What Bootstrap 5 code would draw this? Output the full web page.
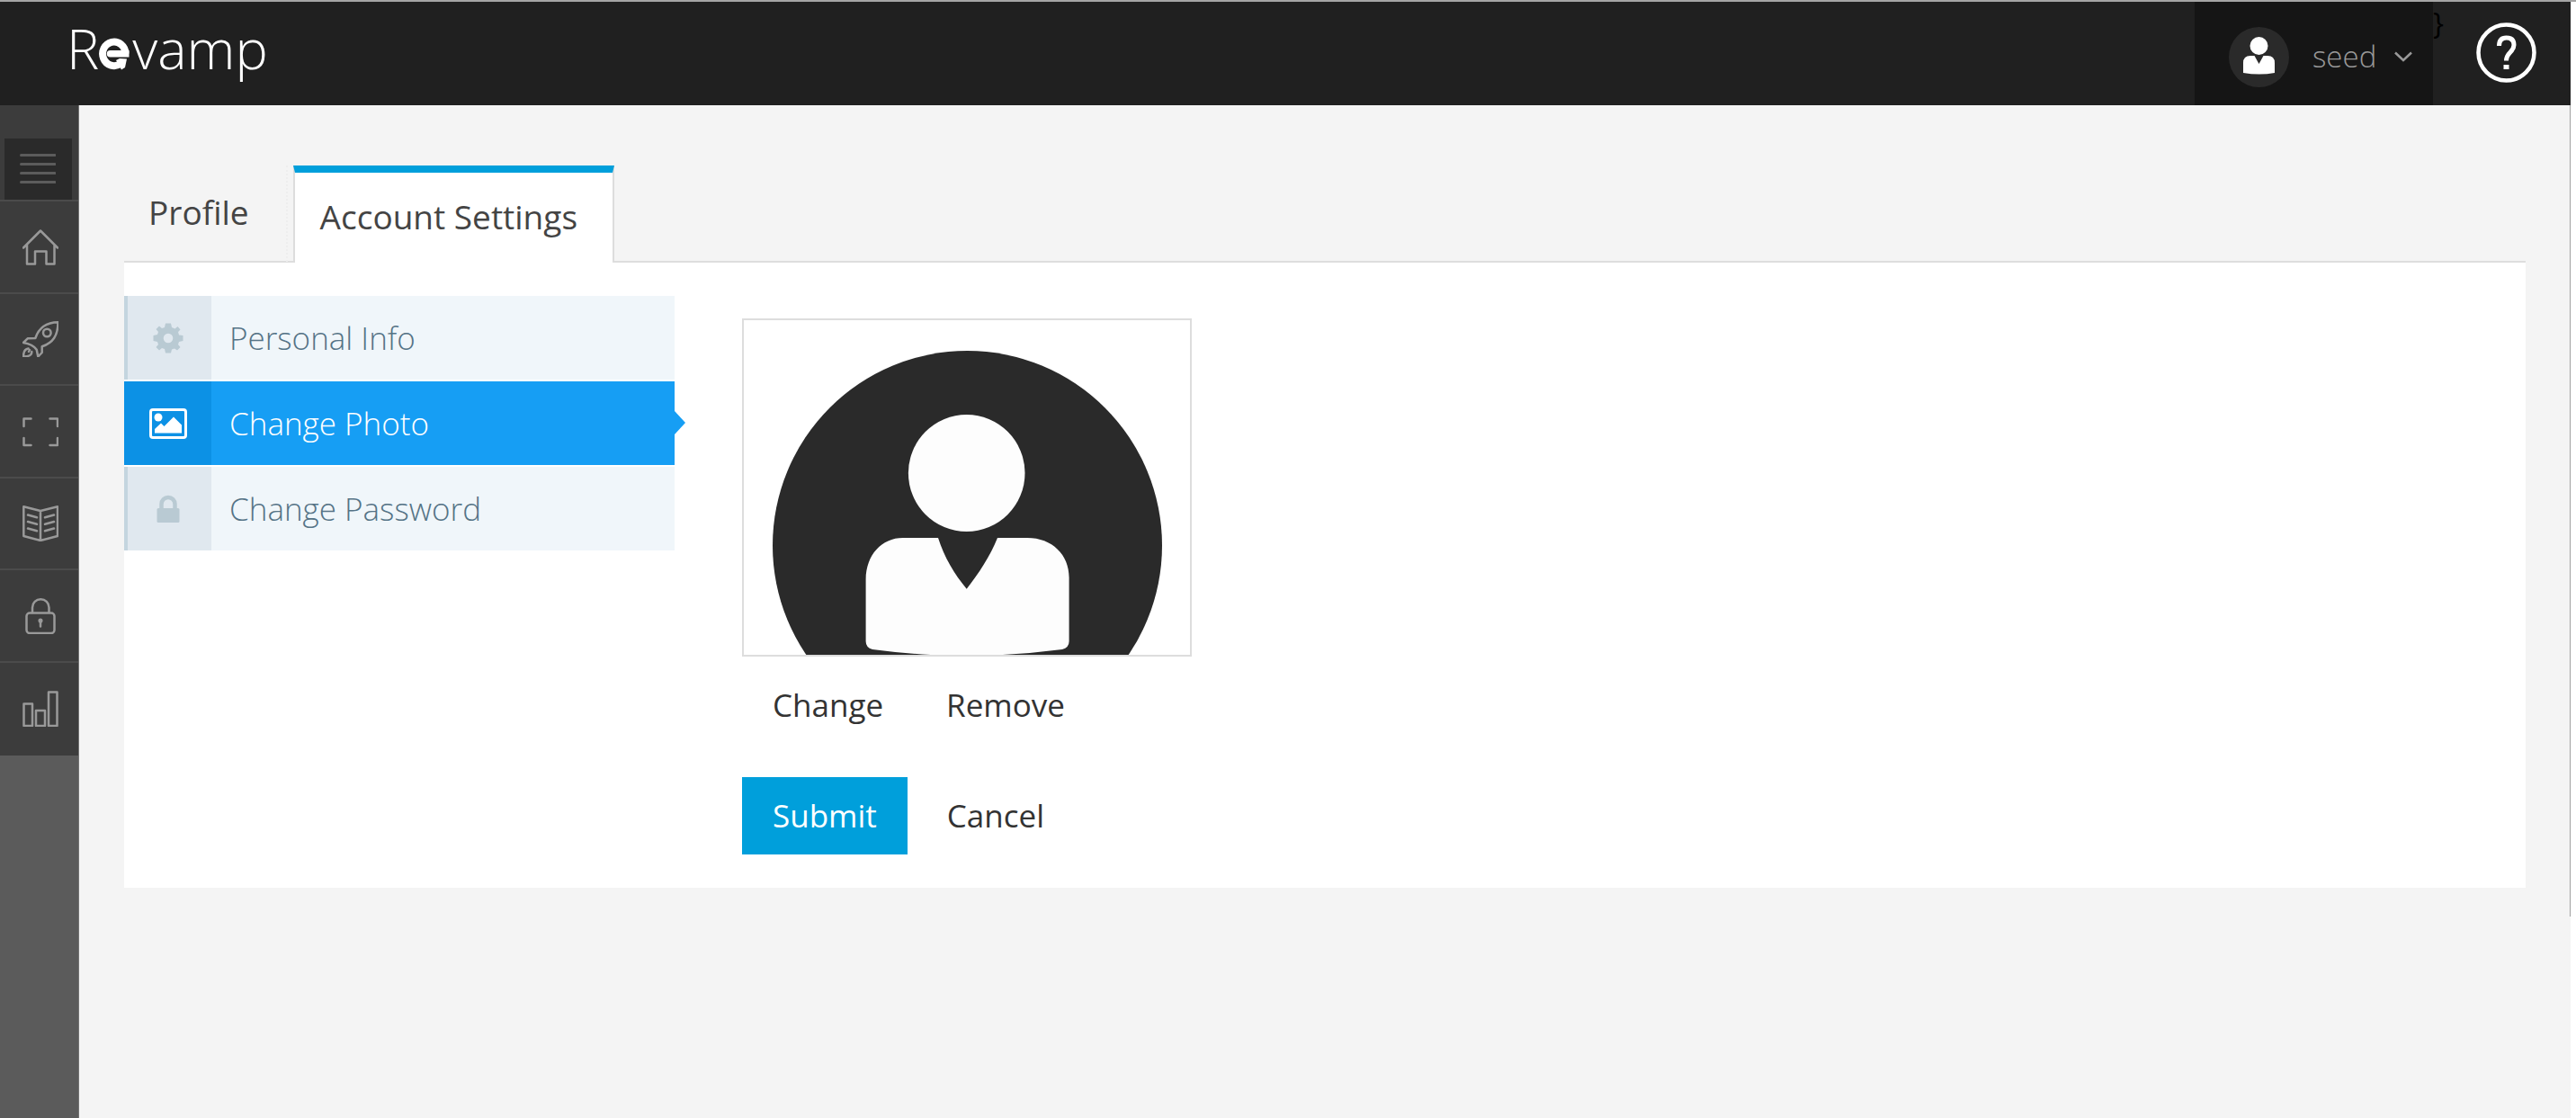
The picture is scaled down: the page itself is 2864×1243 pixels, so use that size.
<!DOCTYPE html>
<html lang="en">
<head>
<meta charset="utf-8">
<meta name="viewport" content="width=device-width, initial-scale=1">
<title>Revamp - Account Settings</title>
<link rel="stylesheet" href="https://cdn.jsdelivr.net/npm/bootstrap@5.3.0/dist/css/bootstrap.min.css">
<style>
body{font-family:"Open Sans",sans-serif;background:#fff;border-top:2px solid #a5a5a5;color:#333}
a{text-decoration:none;color:inherit}
.shell{min-height:calc(100vh - 2px);padding-right:6px}
.topbar{background:#202020;height:115px}
.brand-logo{font-size:61px;font-weight:300;line-height:60px;color:#fff;padding-left:74px;padding-bottom:12px}
.brand-logo svg{width:34px;height:36px;margin-top:12px;margin-right:3px}
.user-menu{background:#151515;border:0;width:265px;padding:7px 0 0 38px;color:#999;font-size:33px;font-weight:300}
.user-menu .user-name{margin-left:26px;margin-right:20px}
.stray{color:#000;font-size:32px;line-height:44px;padding-top:2px}
.help-btn{margin-left:36px;margin-right:38px;padding-bottom:2px}
.rail{width:88px;background:#5b5b5b;border-right:1px solid #757575}
.rail-top{background:#3c3c3c;padding:37px 7px 0 5px}
.rail-toggle{display:block;width:100%;height:68px;border:0;background:#2a2a2a;padding:0 0 0 17px;text-align:left}
.rail-item{display:flex;align-items:center;height:103px;padding-left:25px;background:#3c3c3c;border-top:2px solid #4b4b4b}
.rail-item:nth-child(odd){height:102px}
.rail-item:last-child{height:105px;padding-bottom:2px}
.rail svg{width:40px;height:40px;fill:none;stroke:#999;stroke-width:2.5;stroke-linejoin:round;stroke-linecap:round;display:block}
.workspace{background:#f4f4f4;padding:67px 50px 0;position:relative}
.workspace::after{content:"";position:absolute;right:0;top:0;width:1px;height:902px;background:#a0a0a0}
.main-tabs{border-bottom:2px solid #ddd;height:108px}
.main-tabs .nav-link{border:0;border-radius:0;color:#444;font-size:37px;line-height:50px;padding:27px 41px 27px 27px;height:106px}
.main-tabs .nav-item:first-child{border-right:2px dotted #eee;margin-right:6px}
.main-tabs .nav-link.active{border:2px solid #ddd;border-top:8px solid #009fdb;border-bottom:0;background:#fff;height:108px;padding:24px 39px 24px 28px;color:#444}
.panel{background:#fff;padding:37px 0}
.side-list{width:612px;gap:2px}
.side-link{display:flex;align-items:center;height:93px;background:#f0f6fa;color:#557386;font-size:35px;font-weight:300;position:relative}
.side-link .pic{width:97px;height:93px;background:#e0e8ef;border-left:4px solid #c4d5df;padding-right:4px;color:#b9cad3}
.side-link .label-text{padding-left:20px;padding-top:2px}
.side-link.active{background:#169ef4;color:#fff}
.side-link.active .pic{background:#0c91e5;border-color:#0c91e5;color:#fff}
.side-link.active::after{content:"";position:absolute;left:100%;top:33px;border:13px solid transparent;border-left:12px solid #169ef4;border-right:0}
.photo-form{padding:25px 0 0 75px}
.thumb{width:500px;height:376px;border:2px solid #ddd;margin-bottom:11px}
.thumb svg{display:block;width:100%;height:100%}
.act{border:0;background:none;border-radius:0;font-size:35px;line-height:50px;padding:18px 34px;color:#333}
.act-main{background:#009fdb;color:#fff;font-weight:500}
.photo-row{gap:2px;margin-bottom:37px}
.submit-row{gap:10px}
</style>
<script src="https://cdn.jsdelivr.net/npm/bootstrap@5.3.0/dist/js/bootstrap.bundle.min.js"></script>
</head>
<body>
<div class="shell d-flex flex-column">
<header class="topbar d-flex">
  <a href="#" class="brand-logo d-flex align-items-center me-auto" aria-label="Revamp"><span>R</span><svg viewBox="0 0 34 36"><path d="M29.500 17.500A12.700 13.300 0 1 0 24 28.800" fill="none" stroke="#fff" stroke-width="8"/><path d="M12.500 14H33.500V21.500H12.500A3.700 3.700 0 0 1 12.500 14Z" fill="#fff"/><path d="M19 25L23 23L31 23.500L29 33L25 35.500L22 30Z" fill="#fff"/></svg><span>vamp</span></a>
  <button class="user-menu d-flex align-items-center" type="button">
    <svg width="67" height="67" viewBox="0 0 67 67"><circle cx="33.500" cy="33.500" r="33.500" fill="#2a2a2a"/><circle cx="33.500" cy="21" r="10" fill="#fff"/><path d="M16 51V40Q16 32 24 32H28.500L33.500 41L38.500 32H43Q51 32 51 40V51Q34 54 16 51Z" fill="#fff"/></svg>
    <span class="user-name">seed</span>
    <svg width="20" height="12" viewBox="0 0 20 12"><path d="M1 1.500L10 10L19 1.500" fill="none" stroke="#999" stroke-width="2.500"/></svg>
  </button>
  <span class="stray">}</span>
  <a href="#" class="help-btn d-flex align-items-center" aria-label="Help"><svg width="67" height="67" viewBox="0 0 67 67"><circle cx="33.500" cy="33.500" r="31" fill="none" stroke="#fff" stroke-width="4.500"/><path d="M25.500 26Q25.500 17 33.500 17Q42 17 42 25Q42 29 38 33Q33.500 37.500 33.500 42.500" fill="none" stroke="#fff" stroke-width="5"/><rect x="30.500" y="47" width="6" height="5" fill="#fff"/></svg></a>
</header>
<div class="d-flex flex-grow-1">
  <nav class="rail flex-shrink-0" aria-label="Main">
    <div class="rail-top"><button class="rail-toggle" type="button" aria-label="Toggle menu"><svg viewBox="0 0 40 40"><path d="M1.500 4.500H39M1.500 14.500H39M1.500 24.500H39M1.500 34.500H39" stroke="#5c5c5c" stroke-width="3"/></svg></button></div>
    <a class="rail-item" href="#" aria-label="Home"><svg viewBox="0 0 40 40"><path d="M1 20.500L20 1.500L39 20.500M5 17.500V38.500H14V24.500H26.500V38.500H35.500V17.500"/></svg></a>
    <a class="rail-item" href="#" aria-label="Launch"><svg viewBox="0 0 40 40"><path d="M14.300 19C18 8 27 1.500 39.500 1.300C39.500 16 34 24 21.700 28.300V35L17.300 39.500L15.700 31.700C13 28 10 25.500 1 24L5.700 19.300Z"/><circle cx="27.300" cy="13" r="4.300"/><path d="M6.500 30.500C2 31 1 35 1 39.500C7 39.500 10.500 38 10.300 34M7 34L8 32"/></svg></a>
    <a class="rail-item" href="#" aria-label="Full screen"><svg viewBox="0 0 40 40"><path d="M1.500 14V5.500H9.500M30.500 5.500H39V14M39 27V35H30.500M9.500 35H1.500V27"/></svg></a>
    <a class="rail-item" href="#" aria-label="Library"><svg viewBox="0 0 40 40"><path d="M1.300 1.300L20 6L39 1.300V34L20 39L1.300 34ZM20 6V39M6 10.500L16 13.300M6 18L16 20.800M6 25.500L16 28.300M25 13.300L35 10.500M25 20.800L35 18M25 28.300L35 25.500"/></svg></a>
    <a class="rail-item" href="#" aria-label="Security"><svg viewBox="0 0 40 40"><rect x="4.500" y="16.500" width="31" height="22.500" rx="3.500"/><path d="M11 16V10.500A9 9 0 0 1 29.500 10.500V16M20 25.500V31.500"/><circle cx="20" cy="25" r="1.300"/></svg></a>
    <a class="rail-item" href="#" aria-label="Reports"><svg viewBox="0 0 40 40"><path d="M1.500 14.500H11V39H1.500ZM15 22H25V39H15ZM29 1.500H38.500V39H29Z"/></svg></a>
  </nav>
  <main class="workspace flex-grow-1">
    <ul class="nav nav-tabs main-tabs">
      <li class="nav-item"><a class="nav-link" href="#">Profile</a></li>
      <li class="nav-item"><a class="nav-link active" href="#" aria-current="page">Account Settings</a></li>
    </ul>
    <section class="panel d-flex align-items-start">
      <div class="side-list d-grid flex-shrink-0">
        <a class="side-link" href="#"><span class="pic d-flex align-items-center justify-content-center"><svg width="34" height="34" viewBox="-17 -17 34 34" fill="currentColor"><path fill-rule="evenodd" d="M-3-16.500H3L4-12L7.500-10.500L10.500-13L13.500-9.500L11-7L12-3.500L16.500-3V3L12 4L11 7L13.500 10L10 13.500L7 11.500L4 12.500L3 16.500H-3L-4 12L-7 11L-10 13.500L-13.500 10L-11 7L-12 4L-16.500 3V-3L-12-4L-11-7L-13.500-10L-10-13.500L-7-11L-4-12ZM0-5.300A5.300 5.300 0 1 0 0 5.300A5.300 5.300 0 1 0 0-5.300Z"/></svg></span><span class="label-text">Personal Info</span></a>
        <a class="side-link active" href="#"><span class="pic d-flex align-items-center justify-content-center"><svg width="42" height="34" viewBox="0 0 42 34" fill="currentColor"><rect x="1.500" y="1.500" width="39" height="31" rx="2.500" fill="none" stroke="currentColor" stroke-width="3"/><circle cx="10" cy="10" r="4.500"/><path d="M6 27.500V23L13 16.500L16.500 20L27 9.500L36 18.500V27.500Z"/></svg></span><span class="label-text">Change Photo</span></a>
        <a class="side-link" href="#"><span class="pic d-flex align-items-center justify-content-center"><svg width="26" height="32" viewBox="0 0 26 32" fill="currentColor"><rect x="0.500" y="15" width="25" height="16" rx="1.500"/><path d="M5.500 16V10.500A7.500 7.500 0 0 1 20.500 10.500V16" fill="none" stroke="currentColor" stroke-width="4.500"/></svg></span><span class="label-text">Change Password</span></a>
      </div>
      <form class="photo-form">
        <div class="thumb"><svg viewBox="827 356 496 372" role="img" aria-label="Profile photo"><circle cx="1075.500" cy="606.500" r="216.500" fill="#2a2a2a"/><ellipse cx="1074.700" cy="526" rx="64.800" ry="65" fill="#fdfdfd"/><path d="M962.600 644C963 617 980 598 1004 598H1043C1050 620 1061 638 1074.700 654.700C1088 638 1101 618 1109 598H1142C1170 598 1188.600 617 1188.600 642V713Q1188.600 720 1181 722Q1074 736 970 722Q962.600 720 962.600 713Z" fill="#fdfdfd"/></svg></div>
        <div class="d-flex photo-row"><button type="button" class="act">Change</button><button type="button" class="act">Remove</button></div>
        <div class="d-flex submit-row"><button type="submit" class="act act-main">Submit</button><button type="button" class="act">Cancel</button></div>
      </form>
    </section>
  </main>
</div>
</div>
</body>
</html>
